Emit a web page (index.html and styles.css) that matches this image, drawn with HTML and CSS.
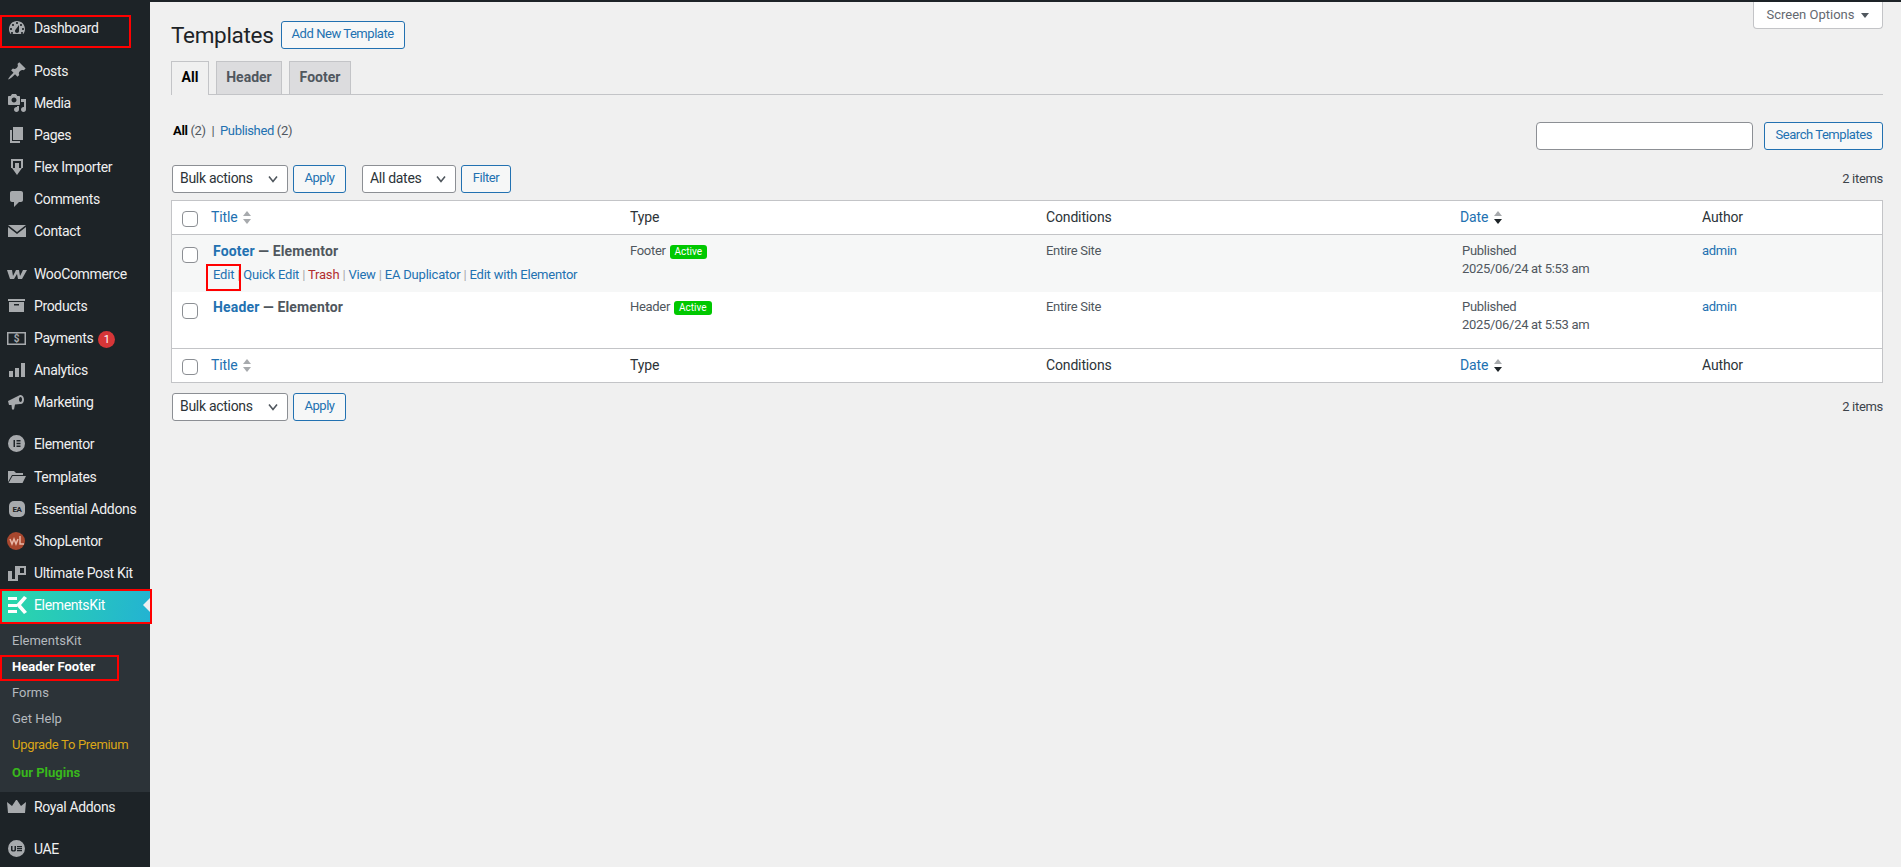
FILE: index.html
```html
<!DOCTYPE html>
<html>
<head>
	<meta charset="utf-8">
	<meta name="viewport" content="width=device-width, initial-scale=1">
	<title>Templates</title>
	<link rel="stylesheet" href="styles.css">
</head>
<body>
	<div class="top-bar"></div>
	<div class="layout">

		<!-- Sidebar -->
		<nav class="sidebar">
			<a class="menu-item mark-dashboard">
				<svg class="icon" viewBox="0 0 20 20"><path fill-rule="evenodd" d="M3.76 16h12.48c1.1-1.37 1.76-3.11 1.76-5 0-4.42-3.58-8-8-8s-8 3.58-8 8c0 1.89.66 3.63 1.76 5zM10 4c.55 0 1 .45 1 1s-.45 1-1 1-1-.45-1-1 .45-1 1-1zM6 6c.55 0 1 .45 1 1s-.45 1-1 1-1-.45-1-1 .45-1 1-1zm8 0c.55 0 1 .45 1 1s-.45 1-1 1-1-.45-1-1 .45-1 1-1zm-5.37 5.55L12 7v6c0 1.1-.9 2-2 2s-2-.9-2-2c0-.57.24-1.08.63-1.45zM4 10c.55 0 1 .45 1 1s-.45 1-1 1-1-.45-1-1 .45-1 1-1zm12 0c.55 0 1 .45 1 1s-.45 1-1 1-1-.45-1-1 .45-1 1-1zm-11 4c.55 0 1 .45 1 1s-.45 1-1 1-1-.45-1-1 .45-1 1-1zm10 0c.55 0 1 .45 1 1s-.45 1-1 1-1-.45-1-1 .45-1 1-1z"/></svg>
				Dashboard
			</a>

			<div class="menu-group">
				<a class="menu-item">
					<svg class="icon" viewBox="0 0 20 20"><path d="M10.44 3.02l1.82-1.82 6.36 6.35-1.83 1.82c-1.05-.68-2.48-.57-3.41.36l-.75.75c-.92.93-1.04 2.35-.35 3.41l-1.83 1.82-2.41-2.41-2.8 2.79c-.42.42-3.38 2.71-3.8 2.29s1.86-3.39 2.28-3.81l2.79-2.79L4.1 9.36l1.83-1.82c1.05.69 2.48.57 3.4-.36l.75-.75c.93-.92 1.05-2.35.36-3.41z"/></svg>
					Posts
				</a>
				<a class="menu-item">
					<svg class="icon" viewBox="0 0 20 20"><path fill-rule="evenodd" d="M13 11V4c0-.55-.45-1-1-1h-1.67L9 1H5L3.67 3H2c-.55 0-1 .45-1 1v7c0 .55.45 1 1 1h10c.55 0 1-.45 1-1zM7 4.5c1.38 0 2.5 1.12 2.5 2.5S8.38 9.5 7 9.5 4.5 8.38 4.5 7 5.62 4.5 7 4.5zM14 6h5v10.5c0 1.38-1.12 2.5-2.5 2.5S14 17.88 14 16.5s1.12-2.5 2.5-2.5c.17 0 .34.02.5.05V9h-3V6zm-4 8.05V13h2v3.5c0 1.38-1.12 2.5-2.5 2.5S7 17.88 7 16.5 8.12 14 9.5 14c.17 0 .34.02.5.05z"/></svg>
					Media
				</a>
				<a class="menu-item">
					<svg class="icon" viewBox="0 0 20 20"><path d="M6 15V2h10v13H6zm-1 1h8v2H3V5h2v11z"/></svg>
					Pages
				</a>
				<a class="menu-item">
					<svg class="icon" viewBox="0 0 20 20"><path d="M4 2h12v9h-2V4H6v7H4zM8 6h4v5h3l-5 7-5-7h3z"/></svg>
					Flex Importer
				</a>
				<a class="menu-item">
					<svg class="icon" viewBox="0 0 20 20"><path d="M5 2h9c1.1 0 2 .9 2 2v7c0 1.1-.9 2-2 2h-2l-5 5v-5H5c-1.1 0-2-.9-2-2V4c0-1.1.9-2 2-2z"/></svg>
					Comments
				</a>
				<a class="menu-item">
					<svg class="icon" viewBox="0 0 20 20"><path d="M1 4h18l-9 7zM1 6l9 7 9-7v10H1z"/></svg>
					Contact
				</a>
			</div>

			<div class="menu-group group-woo">
				<a class="menu-item">
					<svg class="icon" viewBox="0 0 20 20"><path d="M0 6h5l1 6 3-6h3l1 6 3-6h4l-5 9h-4l-1-5-3 5H3z"/></svg>
					WooCommerce
				</a>
				<a class="menu-item">
					<svg class="icon" viewBox="0 0 20 20"><path fill-rule="evenodd" d="M1 3h17v2H1zM2 6h15v10H2zM7 8v1.500h5V8z"/></svg>
					Products
				</a>
				<a class="menu-item">
					<svg class="icon" viewBox="0 0 20 20"><path fill-rule="evenodd" d="M0 4h19v13H0zM1.500 5.500v10h16v-10z"/><text x="9.500" y="14" text-anchor="middle" class="icon-text">$</text></svg>
					Payments <span class="count">1</span>
				</a>
				<a class="menu-item">
					<svg class="icon" viewBox="0 0 20 20"><path d="M2 11h4v6H2zM8 8h4v9H8zM14 3h4v14h-4z"/></svg>
					Analytics
				</a>
				<a class="menu-item">
					<svg class="icon" viewBox="0 0 20 20"><path fill-rule="evenodd" d="M1 9l12-6c2.500-.5 4 2 4 4.500s-1.500 5-4 4.500l-5 .5-1 5H5l-.5-4.500L2 13zM13.500 5c-1 0-1.500 1.200-1.500 2.500s.5 2.500 1.500 2.500 1.500-1.200 1.500-2.500-.5-2.500-1.500-2.500z"/></svg>
					Marketing
				</a>
			</div>

			<div class="menu-group">
				<a class="menu-item">
					<svg class="icon" viewBox="0 0 20 20"><path fill-rule="evenodd" d="M9.500 1a8.500 8.500 0 1 0 0 17 8.500 8.500 0 0 0 0-17zM6.500 6H8v7H6.500zM9.500 6h4v1.400h-4zM9.500 8.800h4v1.400h-4zM9.500 11.600h4V13h-4z"/></svg>
					Elementor
				</a>
				<a class="menu-item item-templates">
					<svg class="icon" viewBox="0 0 20 20"><path d="M1 4h6l2 2h7v2H5l-4 7zM5.500 9H19l-3.500 7H1.500z"/></svg>
					Templates
				</a>
				<a class="menu-item">
					<svg class="icon" viewBox="0 0 20 20"><rect x="2" y="2" width="16" height="16" rx="5"/><text x="10" y="13" text-anchor="middle" class="icon-label">EA</text></svg>
					Essential Addons
				</a>
				<a class="menu-item">
					<svg class="icon" viewBox="0 0 20 20"><circle class="icon-wl" cx="9" cy="10" r="9"/><path class="icon-wl-line" d="M3 8l2 5 2-5 2 5 2-5M13 5v8h4"/></svg>
					ShopLentor
				</a>
				<a class="menu-item">
					<svg class="icon" viewBox="0 0 20 20"><path fill-rule="evenodd" d="M1 8h4v8h3V3h11v9h-8v6H1zM13 5v5h4V5z"/></svg>
					Ultimate Post Kit
				</a>
				<a class="menu-item menu-active mark-ek">
					<svg class="icon icon-white" viewBox="0 0 20 20"><path d="M1 2h9v3H1zM1 9h9v3H1zM1 15h9v3H1zM17 1l3 2-6 7 6 7-3 2-8-9z"/></svg>
					ElementsKit
				</a>
			</div>

			<div class="submenu">
				<a class="sub-item">ElementsKit</a>
				<a class="sub-item sub-current mark-header">Header Footer</a>
				<a class="sub-item">Forms</a>
				<a class="sub-item">Get Help</a>
				<a class="sub-item sub-upgrade">Upgrade To Premium</a>
				<a class="sub-item sub-plugins">Our Plugins</a>
			</div>

			<a class="menu-item">
				<svg class="icon" viewBox="0 0 20 20"><path d="M0 5l5 4 4-6 1 0 4 6 5-4-1 11H1z"/></svg>
				Royal Addons
			</a>
			<div class="menu-group">
				<a class="menu-item">
					<svg class="icon" viewBox="0 0 20 20"><path fill-rule="evenodd" d="M9.500 1a8.500 8.500 0 1 0 0 17 8.500 8.500 0 0 0 0-17zM4 7h1.500v3.500c0 1 2 1 2 0V7H9v4c0 2-5 2-5 0zM10 7h5v1.300h-5zM10 9h5v1.300h-5zM10 11h5v1.300h-5z"/></svg>
					UAE
				</a>
			</div>
		</nav>

		<!-- Content -->
		<main class="content">
			<div class="page-head">
				<div class="title-row">
					<h1 class="page-title">Templates</h1>
					<a class="btn">Add New Template</a>
				</div>
				<div class="screen-options">Screen Options <span class="screen-arrow"></span></div>
			</div>

			<div class="tabs">
				<a class="tab tab-active">All</a>
				<a class="tab tab-header">Header</a>
				<a class="tab tab-footer">Footer</a>
			</div>

			<div class="filter-row">
				<div class="views"><b>All</b> (2) &nbsp;|&nbsp; <a class="link">Published</a> (2)</div>
				<div class="search-box">
					<input type="search" class="search-input">
					<a class="btn">Search Templates</a>
				</div>
			</div>

			<div class="tablenav tablenav-top">
				<select class="select select-bulk"><option>Bulk actions</option></select>
				<a class="btn btn-apply">Apply</a>
				<select class="select select-dates"><option>All dates</option></select>
				<a class="btn btn-filter">Filter</a>
				<span class="items-count">2 items</span>
			</div>

			<table class="list-table">
				<colgroup>
					<col class="col-cb"><col class="col-title"><col class="col-type"><col class="col-cond"><col class="col-date"><col>
				</colgroup>
				<thead>
					<tr>
						<th class="cell-cb"><input type="checkbox" class="checkbox"></th>
						<th><a class="link">Title</a> <svg class="sort" viewBox="0 0 8 13"><path d="M4 0l4 5H0z"/><path d="M4 13L0 8h8z"/></svg></th>
						<th>Type</th>
						<th>Conditions</th>
						<th><a class="link">Date</a> <svg class="sort" viewBox="0 0 8 13"><path d="M4 0l4 5H0z"/><path class="sort-on" d="M4 13L0 8h8z"/></svg></th>
						<th>Author</th>
					</tr>
				</thead>
				<tbody>
					<tr class="row-hover">
						<td class="cell-cb"><input type="checkbox" class="checkbox"></td>
						<td>
							<div class="row-title"><a class="link">Footer</a> — Elementor</div>
							<div class="row-actions">
								<a class="link mark-edit">Edit</a> <span class="sep">|</span>
								<a class="link">Quick Edit</a> <span class="sep">|</span>
								<a class="trash">Trash</a> <span class="sep">|</span>
								<a class="link">View</a> <span class="sep">|</span>
								<a class="link">EA Duplicator</a> <span class="sep">|</span>
								<a class="link">Edit with Elementor</a>
							</div>
						</td>
						<td>Footer <span class="badge">Active</span></td>
						<td>Entire Site</td>
						<td>Published<br>2025/06/24 at 5:53 am</td>
						<td><a class="link">admin</a></td>
					</tr>
					<tr class="row-plain">
						<td class="cell-cb"><input type="checkbox" class="checkbox"></td>
						<td><div class="row-title"><a class="link">Header</a> — Elementor</div></td>
						<td>Header <span class="badge">Active</span></td>
						<td>Entire Site</td>
						<td>Published<br>2025/06/24 at 5:53 am</td>
						<td><a class="link">admin</a></td>
					</tr>
				</tbody>
				<tfoot>
					<tr>
						<th class="cell-cb"><input type="checkbox" class="checkbox"></th>
						<th><a class="link">Title</a> <svg class="sort" viewBox="0 0 8 13"><path d="M4 0l4 5H0z"/><path d="M4 13L0 8h8z"/></svg></th>
						<th>Type</th>
						<th>Conditions</th>
						<th><a class="link">Date</a> <svg class="sort" viewBox="0 0 8 13"><path d="M4 0l4 5H0z"/><path class="sort-on" d="M4 13L0 8h8z"/></svg></th>
						<th>Author</th>
					</tr>
				</tfoot>
			</table>

			<div class="tablenav tablenav-bottom">
				<select class="select select-bulk"><option>Bulk actions</option></select>
				<a class="btn btn-apply">Apply</a>
				<span class="items-count">2 items</span>
			</div>
		</main>
	</div>
</body>
</html>
```

FILE: styles.css
```css
*, *::before, *::after {
	box-sizing: border-box;
}

html, body {
	height: 100%;
}

body {
	margin: 0;
	overflow: hidden;
	background-color: #f0f0f0;
	color: #3c434a;
	font-family: "Roboto", "Liberation Sans", sans-serif;
	font-size: 13px;
	line-height: 18px;
}

.top-bar {
	height: 2px;
	background-color: #1d2327;
}

.layout {
	display: flex;
	height: 865px;
}

/* Sidebar */
.sidebar {
	flex: 0 0 150px;
	width: 150px;
	padding-top: 12px;
	background-color: #1d2327;
}

.menu-group {
	margin-top: 10px;
}

.group-woo {
	margin-top: 11px;
}

.menu-item {
	position: relative;
	display: flex;
	align-items: center;
	height: 32px;
	padding: 6px 0 8px 7px;
	color: #f0f0f1;
	font-size: 14px;
	letter-spacing: -0.35px;
	line-height: 18px;
	white-space: nowrap;
}

.item-templates {
	margin-top: 1px;
}

.icon {
	flex: 0 0 20px;
	width: 20px;
	height: 20px;
	margin-right: 7px;
	fill: #a7aaad;
}

.icon-white {
	fill: #fff;
}

.icon-text {
	font-size: 10px;
	font-weight: 700;
}

.icon-label {
	fill: #1d2327;
	font-size: 8px;
	font-weight: 700;
}

.icon-wl {
	fill: #a8472e;
}

.icon-wl-line {
	fill: none;
	stroke: #e8b8a8;
	stroke-width: 1.500;
}

.count {
	display: inline-block;
	width: 17px;
	height: 17px;
	margin: 2px 0 0 5px;
	border-radius: 50%;
	background-color: #d63638;
	color: #fff;
	font-size: 11px;
	letter-spacing: 0;
	line-height: 17px;
	text-align: center;
}

.menu-active {
	background: linear-gradient(100deg, #2bd9a8, #23b3d2);
	color: #fff;
}

.menu-active::before {
	content: "";
	position: absolute;
	top: 8px;
	right: 0;
	border: 7px solid transparent;
	border-right-color: #f0f0f1;
	border-left-width: 0;
}

.submenu {
	height: 170px;
	padding-top: 6px;
	background-color: #2c3338;
}

.sub-item {
	position: relative;
	display: block;
	height: 26px;
	padding: 4px 0 4px 12px;
	color: #b4b9be;
	font-size: 13px;
	line-height: 18px;
}

.sub-current {
	color: #fff;
	font-weight: 700;
}

.sub-upgrade {
	color: #dba617;
	letter-spacing: -0.3px;
}

.sub-plugins {
	padding-top: 6px;
	color: #39b81c;
	font-weight: 700;
}

/* Red marks over the screenshot */
.mark-dashboard::after,
.mark-ek::after,
.mark-header::after,
.mark-edit::after {
	content: "";
	position: absolute;
	border: 2px solid #f00;
}

.mark-dashboard {
	padding: 5px 0 9px 7px;
}

.mark-dashboard::after {
	top: 1px;
	left: 0;
	width: 131px;
	height: 33px;
}

.mark-ek::after {
	top: -1px;
	left: 0;
	width: 152px;
	height: 35px;
}

.mark-header::after {
	top: 1px;
	left: 0;
	width: 119px;
	height: 26px;
}

.mark-edit {
	position: relative;
}

.mark-edit::after {
	top: -3px;
	left: -7px;
	width: 35px;
	height: 27px;
}

/* Content */
.content {
	flex: 1;
	min-width: 0;
	padding: 0 18px 0 21px;
}

.page-head {
	display: flex;
	justify-content: space-between;
	align-items: flex-start;
}

.title-row {
	display: flex;
	align-items: center;
	margin-top: 19px;
}

.page-title {
	margin: 0 7px 0 0;
	color: #1d2327;
	font-size: 22.5px;
	font-weight: 400;
	letter-spacing: -0.3px;
	line-height: 28px;
}

.btn {
	display: inline-block;
	height: 28px;
	padding: 0 10px;
	border: 1px solid #2271b1;
	border-radius: 3px;
	background-color: #f6f7f7;
	color: #2271b1;
	font-size: 13px;
	letter-spacing: -0.45px;
	line-height: 24px;
	white-space: nowrap;
}

.screen-options {
	display: flex;
	align-items: center;
	justify-content: center;
	gap: 7px;
	width: 130px;
	height: 27px;
	padding-bottom: 1px;
	border: 1px solid #c3c4c7;
	border-top: 0;
	border-radius: 0 0 4px 4px;
	background-color: #fff;
	color: #646970;
}

.screen-arrow {
	margin-top: 2px;
	border: 4px solid transparent;
	border-top: 5px solid #50575e;
	border-bottom: 0;
}

.tabs {
	display: flex;
	gap: 7px;
	height: 34px;
	margin-top: 12px;
	border-bottom: 1px solid #c3c4c7;
}

.tab {
	height: 33px;
	padding-top: 5px;
	border: 1px solid #c3c4c7;
	border-bottom: 0;
	background-color: #dcdcde;
	color: #50575e;
	font-size: 14px;
	font-weight: 700;
	line-height: 20px;
	text-align: center;
}

.tab-active {
	width: 38px;
	height: 34px;
	background-color: #f0f0f0;
	color: #000;
}

.tab-header {
	width: 66px;
}

.tab-footer {
	width: 62px;
}

.filter-row {
	display: flex;
	justify-content: space-between;
	align-items: flex-start;
	margin-top: 27px;
}

.views {
	padding: 0 0 0 2px;
	color: #50575e;
	letter-spacing: -0.35px;
}

.views b {
	color: #000;
}

.link {
	color: #2271b1;
}

.search-box {
	display: flex;
	gap: 11px;
}

.search-input {
	width: 217px;
	height: 28px;
	border: 1px solid #8c8f94;
	border-radius: 4px;
	background-color: #fff;
}

.tablenav {
	display: flex;
	align-items: center;
	height: 28px;
	padding-left: 1px;
}

.tablenav-top {
	margin-top: 15px;
}

.tablenav-bottom {
	margin-top: 10px;
}

.select {
	height: 28px;
	padding: 0 24px 2px 7px;
	border: 1px solid #8c8f94;
	border-radius: 3px;
	background: #fff url("data:image/svg+xml,%3Csvg xmlns='http://www.w3.org/2000/svg' viewBox='0 0 20 20'%3E%3Cpath d='M5 7l5 6 5-6' fill='none' stroke='%2350575e' stroke-width='2'/%3E%3C/svg%3E") no-repeat right 6px center / 16px 16px;
	color: #2c3338;
	font-family: inherit;
	font-size: 14px;
	letter-spacing: -0.3px;
	appearance: none;
}

.select-bulk {
	width: 116px;
	margin-right: 5px;
}

.select-dates {
	width: 94px;
	margin-right: 5px;
}

.btn-apply {
	width: 53px;
	padding: 0;
	text-align: center;
}

.btn-filter {
	width: 50px;
	padding: 0;
	text-align: center;
}

.tablenav-top .btn-apply {
	margin-right: 16px;
}

.items-count {
	margin-left: auto;
	color: #3c434a;
	letter-spacing: -0.3px;
}

/* Table */
.list-table {
	width: 100%;
	margin-top: 7px;
	border: 1px solid #c3c4c7;
	border-spacing: 0;
	background-color: #fff;
	table-layout: fixed;
}

.col-cb {
	width: 31px;
}

.col-title {
	width: 417px;
}

.col-type {
	width: 416px;
}

.col-cond {
	width: 416px;
}

.col-date {
	width: 240px;
}

th {
	height: 34px;
	padding: 0 10px 2px;
	color: #2c3338;
	font-size: 14px;
	font-weight: 400;
	letter-spacing: -0.15px;
	text-align: left;
}

thead th {
	border-bottom: 1px solid #c3c4c7;
}

tfoot th {
	border-top: 1px solid #c3c4c7;
}

th:nth-child(2), th:nth-child(5) {
	padding-left: 8px;
}

td {
	height: 56px;
	padding: 7px 10px 0;
	color: #50575e;
	letter-spacing: -0.3px;
	vertical-align: top;
}

.row-hover td {
	height: 57px;
	background-color: #f6f7f7;
}

.row-plain td {
	padding-top: 6px;
}

th.cell-cb {
	padding: 2px 0 0 10px;
}

td.cell-cb {
	padding: 12px 0 0 10px;
}

.row-plain td.cell-cb {
	padding-top: 11px;
}

.checkbox {
	display: block;
	width: 16px;
	height: 16px;
	margin: 0;
	border: 1px solid #8c8f94;
	border-radius: 4px;
	background-color: #fff;
	appearance: none;
}

.sort {
	width: 8px;
	height: 13px;
	margin-left: 2px;
	vertical-align: -2px;
	fill: #a7aaad;
}

.sort-on {
	fill: #1d2327;
}

.row-title {
	color: #50575e;
	font-size: 14px;
	font-weight: 700;
	letter-spacing: 0.15px;
}

.row-actions {
	margin-top: 6px;
	color: #a7aaad;
	letter-spacing: -0.2px;
	white-space: nowrap;
}

.trash {
	color: #b32d2e;
}

.badge {
	display: inline-block;
	height: 14px;
	margin-left: 1px;
	padding: 0 5px;
	border-radius: 3px;
	background-color: #00c800;
	color: #fff;
	font-size: 10px;
	letter-spacing: 0;
	line-height: 14px;
	vertical-align: 0;
}
```
